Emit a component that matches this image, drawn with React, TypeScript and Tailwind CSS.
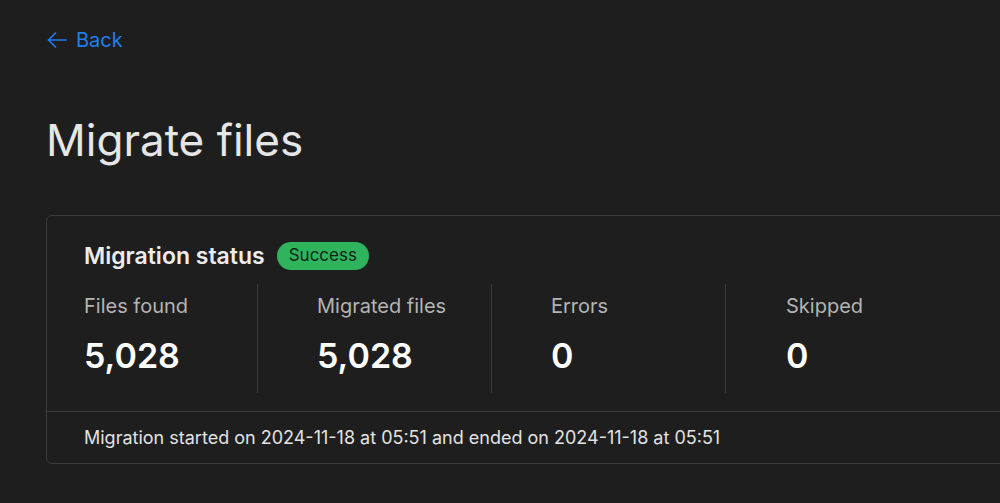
import React from "react";

const stats = [
  { label: "Files found", value: "5,028" },
  { label: "Migrated files", value: "5,028" },
  { label: "Errors", value: "0" },
  { label: "Skipped", value: "0" },
];

const StatusCard = () => {
  return (
    <div className="mt-[48px] w-[1100px] rounded-md border border-[#3c3c3c] bg-[#1e1e1e]">
      {/* Header */}
      <div className="px-[37px] pt-[26px] flex items-center gap-3 h-[54px]">
        <h2 className="text-[23px] font-semibold text-[#ececec]">Migration status</h2>
        <span className="h-7 px-3 rounded-full bg-[#2fb35c] text-[#0f2416] text-[17px] flex items-center">
          Success
        </span>
      </div>

      {/* Stats */}
      <div className="px-[37px] mt-[14px] flex">
        {stats.map((s, i) => (
          <div
            key={s.label}
            className={
              i === 0
                ? "w-[174px] h-[109px] pt-[10px] border-r border-[#3a3a3a]"
                : i < 3
                ? "w-[234px] pl-[59px] h-[109px] pt-[10px] border-r border-[#3a3a3a]"
                : "w-[234px] pl-[60px] h-[109px] pt-[10px]"
            }
          >
            <div className="text-[20px] leading-6 text-[#b4b4b4]">{s.label}</div>
            <div className="mt-[18px] text-[34px] leading-10 font-semibold text-white">{s.value}</div>
          </div>
        ))}
      </div>

      {/* Footer */}
      <div className="mt-[18px] border-t border-[#3c3c3c] h-[52px] px-[37px] flex items-center">
        <p className="text-[18px] text-[#e2e2e2]">
          Migration started on 2024-11-18 at 05:51 and ended on 2024-11-18 at 05:51
        </p>
      </div>
    </div>
  );
};

const App = () => {
  return (
    <div
      className="w-full h-[503px] overflow-hidden bg-[#1e1e1e] pl-[46px]"
      style={{ fontFamily: "Inter, 'Noto Sans', sans-serif" }}
    >
      <button className="pt-[26px] flex items-center gap-[8px] text-[20px] leading-7 text-[#1f7ef0]">
        <svg width="22" height="22" viewBox="0 0 22 22" fill="none" stroke="currentColor" strokeWidth="1.6" strokeLinecap="round" strokeLinejoin="round">
          <path d="M20 11H2.5" />
          <path d="M9.5 4L2.5 11L9.5 18" />
        </svg>
        Back
      </button>
      <h1 className="mt-[59px] text-[44px] leading-[54px] text-[#e6e6e6]">Migrate files</h1>
      <StatusCard />
    </div>
  );
};

export default App;
